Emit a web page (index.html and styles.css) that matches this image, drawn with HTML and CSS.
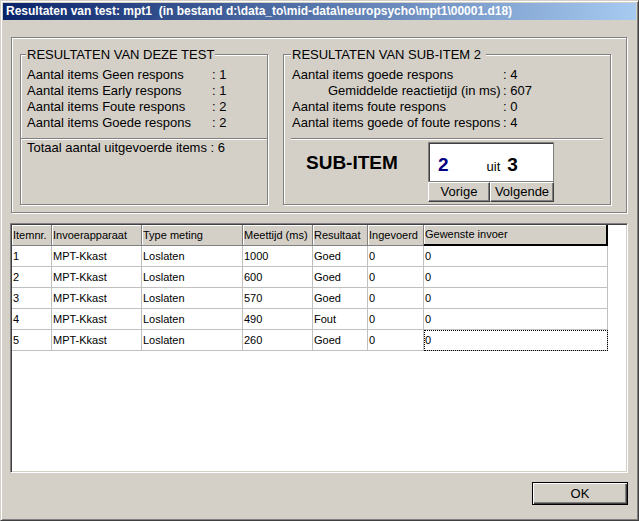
FILE: index.html
```html
<!DOCTYPE html>
<html lang="nl">
<head>
<meta charset="utf-8">
<title>Resultaten van test</title>
<link rel="stylesheet" href="styles.css">
</head>
<body>
<div class="window">
  <div class="titlebar"><span class="title">Resultaten van test: mpt1  (in bestand d:\data_to\mid-data\neuropsycho\mpt1\00001.d18)</span></div>
  <div class="client">
    <div class="summary">
      <fieldset class="group group-left">
        <legend>RESULTATEN VAN DEZE TEST</legend>
        <div class="stats stats-left">
          <span>Aantal items Geen respons</span><span>: 1</span>
          <span>Aantal items Early respons</span><span>: 1</span>
          <span>Aantal items Foute respons</span><span>: 2</span>
          <span>Aantal items Goede respons</span><span>: 2</span>
        </div>
        <div class="sep sep-left"></div>
        <div class="total">Totaal aantal uitgevoerde items : 6</div>
      </fieldset>
      <fieldset class="group group-right">
        <legend>RESULTATEN VAN SUB-ITEM 2&nbsp;</legend>
        <div class="stats stats-right">
          <span>Aantal items goede respons</span><span>: 4</span>
          <span class="indent">Gemiddelde reactietijd (in ms)</span><span>: 607</span>
          <span>Aantal items foute respons</span><span>: 0</span>
          <span>Aantal items goede of foute respons</span><span>: 4</span>
        </div>
        <div class="sep sep-right"></div>
        <div class="subitem">
          <div class="subitem-label">SUB-ITEM</div>
          <div class="nav">
            <div class="counter"><span class="cur">2</span><span class="uit">uit</span><span class="tot">3</span></div>
            <div class="nav-buttons"><button class="btn btn-prev">Vorige</button><button class="btn btn-next">Volgende</button></div>
          </div>
        </div>
      </fieldset>
    </div>
    <div class="grid-frame">
      <div class="grid">
        <div class="cell hd">Itemnr.</div>
        <div class="cell hd">Invoerapparaat</div>
        <div class="cell hd">Type meting</div>
        <div class="cell hd">Meettijd (ms)</div>
        <div class="cell hd">Resultaat</div>
        <div class="cell hd">Ingevoerd</div>
        <div class="cell hd hd-last">Gewenste invoer</div>

        <div class="cell">1</div><div class="cell">MPT-Kkast</div><div class="cell">Loslaten</div><div class="cell">1000</div><div class="cell">Goed</div><div class="cell">0</div><div class="cell">0</div>
        <div class="cell">2</div><div class="cell">MPT-Kkast</div><div class="cell">Loslaten</div><div class="cell">600</div><div class="cell">Goed</div><div class="cell">0</div><div class="cell">0</div>
        <div class="cell">3</div><div class="cell">MPT-Kkast</div><div class="cell">Loslaten</div><div class="cell">570</div><div class="cell">Goed</div><div class="cell">0</div><div class="cell">0</div>
        <div class="cell">4</div><div class="cell">MPT-Kkast</div><div class="cell">Loslaten</div><div class="cell">490</div><div class="cell">Fout</div><div class="cell">0</div><div class="cell">0</div>
        <div class="cell">5</div><div class="cell">MPT-Kkast</div><div class="cell">Loslaten</div><div class="cell">260</div><div class="cell">Goed</div><div class="cell">0</div><div class="cell focus">0</div>
      </div>
    </div>
    <div class="footer"><button class="ok">OK</button></div>
  </div>
</div>
</body>
</html>
```

FILE: styles.css
```css
html, body {
  margin: 0;
  padding: 0;
  background: #d4d0c8;
  overflow: hidden;
}

.window {
  box-sizing: border-box;
  width: 639px;
  height: 521px;
  padding: 2px;
  border: 1px solid;
  border-color: #d4d0c8 #404040 #404040 #d4d0c8;
  box-shadow: inset 1px 1px 0 #ffffff, inset -1px -1px 0 #808080;
  background: #d4d0c8;
  font-family: "Liberation Sans", Arial, sans-serif;
  font-size: 13px;
  color: #000;
}

.titlebar {
  height: 17px;
  line-height: 17px;
  padding-left: 3px;
  background: linear-gradient(to right, #0a246a, #a6caf0);
  color: #ffffff;
  font-weight: bold;
  font-size: 12px;
  white-space: pre;
  overflow: hidden;
}

.client {
  padding: 17px 8px 0 7px;
}

/* summary frame */
.summary {
  box-sizing: border-box;
  margin: 0 1px;
  display: flex;
  gap: 15px;
  padding: 9px 15px 7px 8px;
  border: 1px solid #808080;
  box-shadow: inset 1px 1px 0 #ffffff, 1px 1px 0 #ffffff;
}

.group {
  box-sizing: border-box;
  margin: 0;
  min-width: 0;
  height: 158px;
  border: 1px solid #808080;
  box-shadow: inset 1px 1px 0 #ffffff, 1px 1px 0 #ffffff;
}

.group legend {
  padding: 0 1px;
  margin-left: -1px;
  line-height: 15px;
  font-size: 13px;
  background: #d4d0c8;
}

.group-left {
  width: 248px;
  padding: 5px 6px 0 6px;
}

.group-right {
  width: 328px;
  padding: 5px 8px 0 8px;
}

.stats {
  display: grid;
  line-height: 16px;
  white-space: nowrap;
}

.stats-left { grid-template-columns: 185px auto; }
.stats-right { grid-template-columns: 211px auto; }

.indent { padding-left: 36px; }

.sep {
  height: 0;
  border-top: 1px solid #808080;
  border-bottom: 1px solid #ffffff;
  margin-top: 7px;
}

.sep-left { margin-left: -6px; margin-right: -6px; }
.sep-right { margin-left: -1px; margin-right: -1px; }

.total {
  line-height: 16px;
  white-space: nowrap;
}

.subitem {
  display: flex;
  align-items: flex-start;
  margin-top: 2px;
}

.subitem-label {
  box-sizing: border-box;
  width: 136px;
  padding-left: 14px;
  height: 40px;
  line-height: 42px;
  font-size: 19px;
  font-weight: bold;
}

.nav {
  width: 126px;
}

.counter {
  box-sizing: border-box;
  height: 40px;
  display: flex;
  align-items: baseline;
  padding: 12px 0 0 9px;
  background: #ffffff;
  border: 1px solid #808080;
  box-shadow: inset 1px 1px 0 #404040;
}

.cur, .tot {
  font-size: 19px;
  font-weight: bold;
  line-height: 19px;
}

.cur { color: #000080; }

.uit {
  margin-left: 38px;
  font-size: 13px;
}

.tot { margin-left: 7px; }

.nav-buttons {
  display: flex;
}

.btn {
  box-sizing: border-box;
  height: 20px;
  padding: 0;
  margin: 0;
  font-family: "Liberation Sans", Arial, sans-serif;
  font-size: 13px;
  line-height: 18px;
  color: #000;
  background: #d4d0c8;
  border: 1px solid;
  border-color: #ffffff #404040 #404040 #ffffff;
  box-shadow: inset -1px -1px 0 #808080;
}

.btn-prev { width: 62px; }
.btn-next { width: 64px; }

/* grid */
.grid-frame {
  box-sizing: border-box;
  margin-top: 10px;
  height: 250px;
  padding: 1px 0 0 1px;
  border: 1px solid;
  border-color: #808080 #ffffff #ffffff #808080;
  box-shadow: inset 1px 1px 0 #404040, inset -1px -1px 0 #d4d0c8;
  background: #ffffff;
}

.grid {
  display: grid;
  grid-template-columns: 40px 90px 101px 70px 55px 56px 184px;
  grid-auto-rows: 21px;
  font-size: 11px;
}

.cell {
  box-sizing: border-box;
  padding-left: 1px;
  line-height: 20px;
  white-space: nowrap;
  overflow: hidden;
  border-right: 1px solid #c0c0c0;
  border-bottom: 1px solid #c0c0c0;
}

.hd {
  background: #d4d0c8;
  border-right-color: #808080;
  border-bottom-color: #808080;
  box-shadow: inset 1px 1px 0 #ffffff;
}

.hd-last {
  border-right: 2px solid #000000;
  border-bottom: 2px solid #000000;
  line-height: 19px;
}

.focus {
  outline: 1px dotted #000000;
  outline-offset: -1px;
}

.footer {
  display: flex;
  justify-content: flex-end;
  margin-top: 9px;
}

.ok {
  box-sizing: border-box;
  width: 96px;
  height: 23px;
  margin: 0;
  padding: 0;
  font-family: "Liberation Sans", Arial, sans-serif;
  font-size: 13px;
  color: #000;
  background: #d4d0c8;
  border: 1px solid #000000;
  box-shadow: inset 1px 1px 0 #ffffff, inset -1px -1px 0 #404040, inset -2px -2px 0 #808080;
}
```
